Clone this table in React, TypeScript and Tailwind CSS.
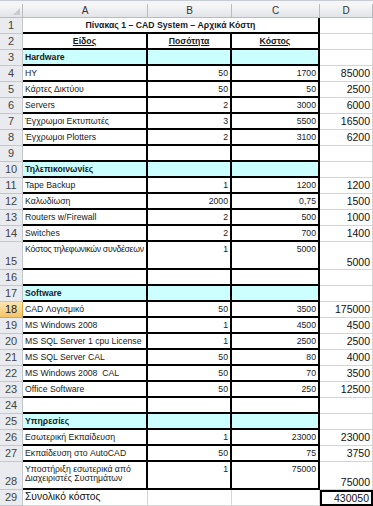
import clsx from 'clsx';

type Row = {
  n: number;
  kind?: 'title' | 'head' | 'section' | 'item' | 'empty' | 'total';
  a?: string;
  b?: string;
  c?: string;
  d?: string;
  tall?: boolean;
  wrap?: boolean;
  tight?: boolean;
  active?: boolean;
};

const rows: Row[] = [
  { n: 1, kind: 'title' },
  { n: 2, kind: 'head' },
  { n: 3, kind: 'section', a: 'Hardware' },
  { n: 4, a: 'HY', b: '50', c: '1700', d: '85000' },
  { n: 5, a: 'Κάρτες Δικτύου', b: '50', c: '50', d: '2500' },
  { n: 6, a: 'Servers', b: '2', c: '3000', d: '6000' },
  { n: 7, a: 'Έγχρωμοι Εκτυπωτές', b: '3', c: '5500', d: '16500' },
  { n: 8, a: 'Έγχρωμοι Plotters', b: '2', c: '3100', d: '6200' },
  { n: 9, kind: 'empty' },
  { n: 10, kind: 'section', a: 'Τηλεπικοινωνίες' },
  { n: 11, a: 'Tape Backup', b: '1', c: '1200', d: '1200' },
  { n: 12, a: 'Καλωδίωση', b: '2000', c: '0,75', d: '1500' },
  { n: 13, a: 'Routers w/Firewall', b: '2', c: '500', d: '1000' },
  { n: 14, a: 'Switches', b: '2', c: '700', d: '1400' },
  { n: 15, a: 'Κόστος τηλεφωνικών συνδέσεων', b: '1', c: '5000', d: '5000', tall: true, tight: true },
  { n: 16, kind: 'empty' },
  { n: 17, kind: 'section', a: 'Software' },
  { n: 18, a: 'CAD Λογισμικό', b: '50', c: '3500', d: '175000', active: true },
  { n: 19, a: 'MS Windows 2008', b: '1', c: '4500', d: '4500' },
  { n: 20, a: 'MS SQL Server 1 cpu License', b: '1', c: '2500', d: '2500' },
  { n: 21, a: 'MS SQL Server CAL', b: '50', c: '80', d: '4000' },
  { n: 22, a: 'MS Windows 2008\u00a0 CAL', b: '50', c: '70', d: '3500' },
  { n: 23, a: 'Office Software', b: '50', c: '250', d: '12500' },
  { n: 24, kind: 'empty' },
  { n: 25, kind: 'section', a: 'Υπηρεσίες' },
  { n: 26, a: 'Εσωτερική Εκπαίδευση', b: '1', c: '23000', d: '23000' },
  { n: 27, a: 'Εκπαίδευση στο AutoCAD', b: '50', c: '75', d: '3750' },
  { n: 28, a: 'Υποστήριξη εσωτερικά από Διαχειριστές Συστημάτων', b: '1', c: '75000', d: '75000', tall: true, wrap: true },
  { n: 29, kind: 'total', a: 'Συνολικό κόστος', d: '430050' },
];

function RowHead({ n, active, tall }: { n: number; active?: boolean; tall?: boolean }) {
  return (
    <div
      className={clsx(
        'flex justify-center border-r border-b text-[11px] leading-none',
        active
          ? 'bg-gradient-to-b from-[#fbe7b3] to-[#f2c463] border-[#d9a441] text-[#222]'
          : 'bg-[#e9ebee] border-[#c3c7cc] text-[#444]',
        tall ? 'items-end pb-[2px]' : 'items-center'
      )}
    >
      {n}
    </div>
  );
}

function DCell({ value, tall, boxed }: { value?: string; tall?: boolean; boxed?: boolean }) {
  return (
    <div
      className={clsx(
        'flex justify-end pr-[2px] text-[10.5px] leading-none text-[#111]',
        boxed ? 'border-2 border-black' : 'border-r border-b border-[#d4d4d4]',
        tall ? 'items-end pb-[2px]' : 'items-center'
      )}
    >
      {value}
    </div>
  );
}

export default function App() {
  return (
    <div className="w-[373px] h-[506px] overflow-hidden bg-white font-['Liberation_Sans',Arial,sans-serif] text-[#1a1a1a]">
      {/* ribbon edge */}
      <div className="h-[4px] bg-[#f3f5f8] border-t border-[#c9ccd1]" />

      {/* column letters */}
      <div className="grid grid-cols-[23px_125px_84px_88px_53px] h-[14px]">
        <div className="relative border-r border-b border-[#b8bcc2] bg-gradient-to-b from-[#f7f7f7] to-[#e2e4e7]">
          <svg className="absolute right-[2px] bottom-[2px]" width="7" height="7" viewBox="0 0 7 7">
            <path d="M7 0 L7 7 L0 7 Z" fill="#c9cbce" />
          </svg>
        </div>
        {['A', 'B', 'C', 'D'].map((l) => (
          <div
            key={l}
            className="flex items-center justify-center border-r border-b border-[#b8bcc2] bg-gradient-to-b from-[#f7f7f7] to-[#e2e4e7] text-[10px] leading-none text-[#333]"
          >
            {l}
          </div>
        ))}
      </div>

      {rows.map((r) => {
        const kind = r.kind ?? 'item';
        const h = r.tall ? 'h-[28px]' : 'h-[16px]';

        if (kind === 'title') {
          return (
            <div key={r.n} className={`grid grid-cols-[23px_125px_84px_88px_53px] ${h}`}>
              <RowHead n={r.n} />
              <div className="col-span-3 flex items-center justify-center border-r-2 border-b-2 border-black text-[8.7px] font-bold leading-none">
                Πίνακας 1 – CAD System – Αρχικά Κόστη
              </div>
              <DCell />
            </div>
          );
        }

        if (kind === 'head') {
          return (
            <div key={r.n} className={`grid grid-cols-[23px_125px_84px_88px_53px] ${h}`}>
              <RowHead n={r.n} />
              {['Είδος', 'Ποσότητα', 'Κόστος'].map((t) => (
                <div
                  key={t}
                  className="flex items-center justify-center border-r-2 border-b-2 border-black text-[8.7px] font-bold leading-none underline"
                >
                  {t}
                </div>
              ))}
              <DCell />
            </div>
          );
        }

        if (kind === 'total') {
          return (
            <div key={r.n} className={`grid grid-cols-[23px_125px_84px_88px_53px] ${h}`}>
              <RowHead n={r.n} />
              <div className="flex items-center pl-[2px] border-r border-b border-[#d4d4d4] text-[10.3px] leading-none text-[#111]">
                {r.a}
              </div>
              <div className="border-r border-b border-[#d4d4d4]" />
              <div className="border-r border-b border-[#d4d4d4]" />
              <DCell value={r.d} boxed />
            </div>
          );
        }

        const section = kind === 'section';
        const cellBase = clsx(
          'flex border-r-2 border-b-2 border-black text-[8.7px] leading-none overflow-hidden',
          section && 'bg-[#ccffff]'
        );

        return (
          <div key={r.n} className={`grid grid-cols-[23px_125px_84px_88px_53px] ${h}`}>
            <RowHead n={r.n} active={r.active} tall={r.tall} />
            <div
              className={clsx(
                cellBase,
                'pl-[2px]',
                section && 'font-bold',
                r.tight && 'tracking-[-0.3px]',
                r.wrap
                  ? 'flex-col justify-start pt-[3px] leading-[11px]'
                  : r.tall
                    ? 'items-start pt-[3px] whitespace-nowrap'
                    : 'items-center whitespace-nowrap'
              )}
            >
              {r.a}
            </div>
            <div className={clsx(cellBase, 'justify-end pr-[2px]', r.tall ? 'items-start pt-[3px]' : 'items-center')}>
              {r.b}
            </div>
            <div className={clsx(cellBase, 'justify-end pr-[2px]', r.tall ? 'items-start pt-[3px]' : 'items-center')}>
              {r.c}
            </div>
            <DCell value={r.d} tall={r.tall} />
          </div>
        );
      })}
    </div>
  );
}
